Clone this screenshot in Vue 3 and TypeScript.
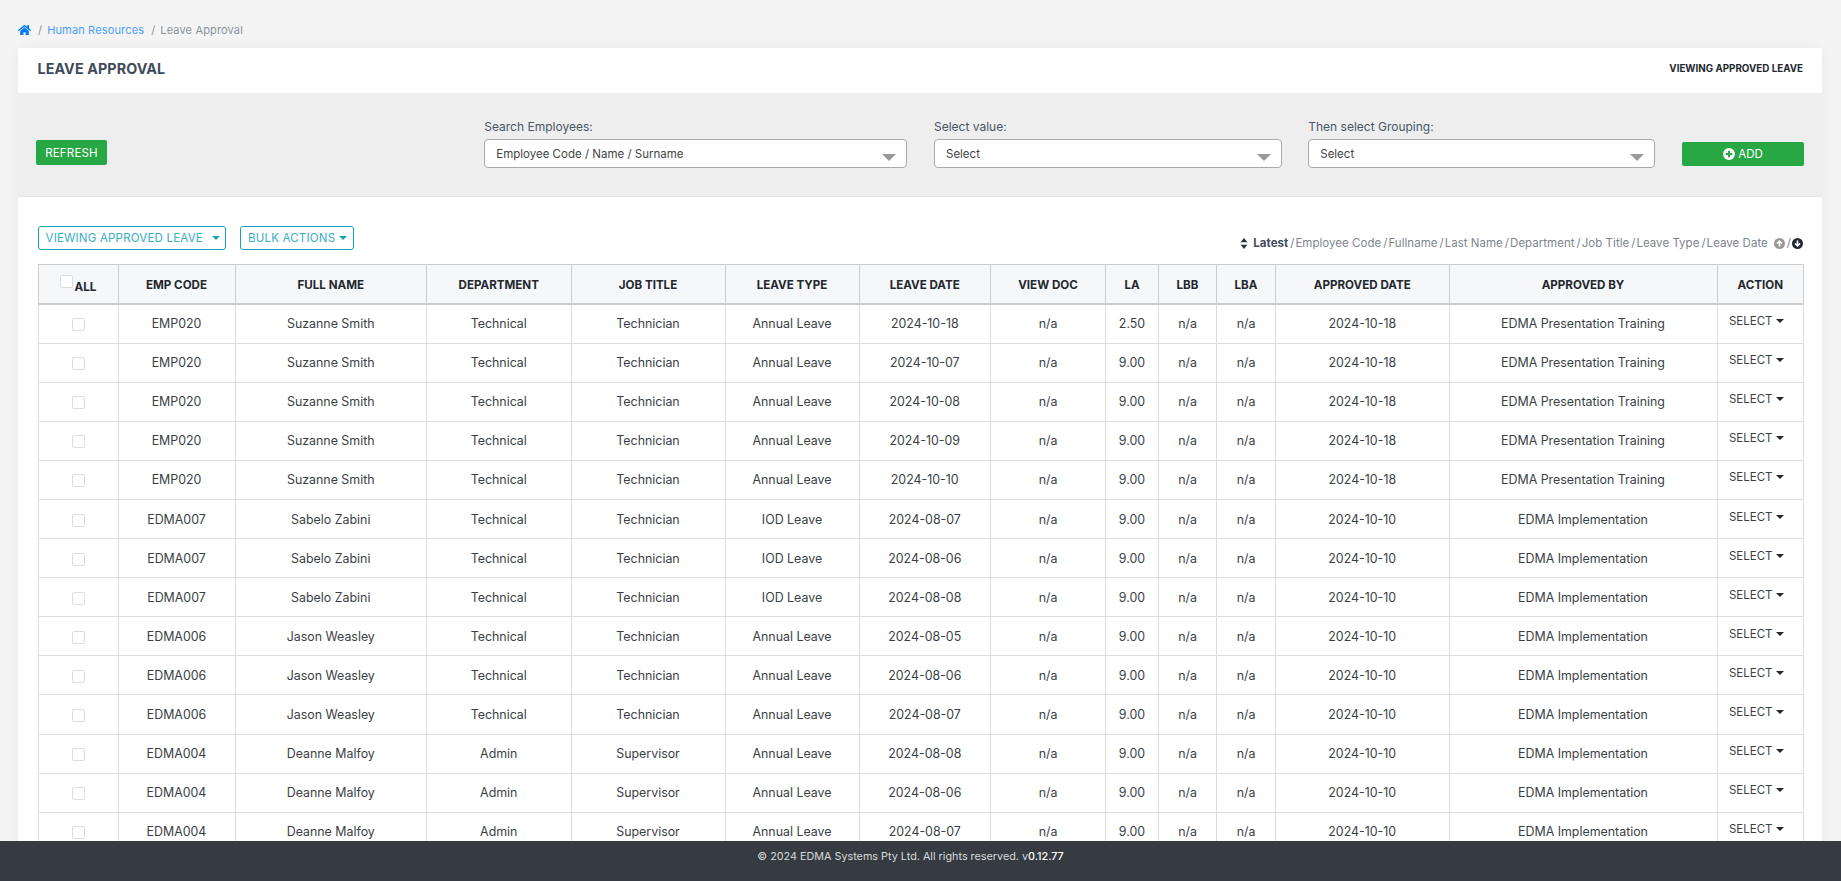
<script setup lang="ts">
interface Row {
  code: string
  name: string
  dept: string
  job: string
  type: string
  date: string
  la: string
  approved: string
  by: string
}

const presentation = 'EDMA Presentation Training'
const implementation = 'EDMA Implementation'

function make(code: string, name: string, dept: string, job: string, type: string, date: string, la: string, approved: string, by: string): Row {
  return { code, name, dept, job, type, date, la, approved, by }
}

const rows: Row[] = [
  make('EMP020', 'Suzanne Smith', 'Technical', 'Technician', 'Annual Leave', '2024-10-18', '2.50', '2024-10-18', presentation),
  make('EMP020', 'Suzanne Smith', 'Technical', 'Technician', 'Annual Leave', '2024-10-07', '9.00', '2024-10-18', presentation),
  make('EMP020', 'Suzanne Smith', 'Technical', 'Technician', 'Annual Leave', '2024-10-08', '9.00', '2024-10-18', presentation),
  make('EMP020', 'Suzanne Smith', 'Technical', 'Technician', 'Annual Leave', '2024-10-09', '9.00', '2024-10-18', presentation),
  make('EMP020', 'Suzanne Smith', 'Technical', 'Technician', 'Annual Leave', '2024-10-10', '9.00', '2024-10-18', presentation),
  make('EDMA007', 'Sabelo Zabini', 'Technical', 'Technician', 'IOD Leave', '2024-08-07', '9.00', '2024-10-10', implementation),
  make('EDMA007', 'Sabelo Zabini', 'Technical', 'Technician', 'IOD Leave', '2024-08-06', '9.00', '2024-10-10', implementation),
  make('EDMA007', 'Sabelo Zabini', 'Technical', 'Technician', 'IOD Leave', '2024-08-08', '9.00', '2024-10-10', implementation),
  make('EDMA006', 'Jason Weasley', 'Technical', 'Technician', 'Annual Leave', '2024-08-05', '9.00', '2024-10-10', implementation),
  make('EDMA006', 'Jason Weasley', 'Technical', 'Technician', 'Annual Leave', '2024-08-06', '9.00', '2024-10-10', implementation),
  make('EDMA006', 'Jason Weasley', 'Technical', 'Technician', 'Annual Leave', '2024-08-07', '9.00', '2024-10-10', implementation),
  make('EDMA004', 'Deanne Malfoy', 'Admin', 'Supervisor', 'Annual Leave', '2024-08-08', '9.00', '2024-10-10', implementation),
  make('EDMA004', 'Deanne Malfoy', 'Admin', 'Supervisor', 'Annual Leave', '2024-08-06', '9.00', '2024-10-10', implementation),
  make('EDMA004', 'Deanne Malfoy', 'Admin', 'Supervisor', 'Annual Leave', '2024-08-07', '9.00', '2024-10-10', implementation),
]

const colWidths = [80, 117, 191.5, 144.5, 154, 134, 131.5, 115, 53, 58, 59, 173.5, 268, 86.5]
const headers = ['EMP CODE', 'FULL NAME', 'DEPARTMENT', 'JOB TITLE', 'LEAVE TYPE', 'LEAVE DATE', 'VIEW DOC', 'LA', 'LBB', 'LBA', 'APPROVED DATE', 'APPROVED BY', 'ACTION']
const sortKeys = ['Employee Code', 'Fullname', 'Last Name', 'Department', 'Job Title', 'Leave Type', 'Leave Date']
</script>

<template>
  <div class="page">
    <main class="main">
      <nav class="crumbs">
        <svg class="home" viewBox="0 0 576 512" aria-hidden="true">
          <path d="M280.37 148.26L96 300.11V464a16 16 0 0 0 16 16l112.06-.29a16 16 0 0 0 15.92-16V368a16 16 0 0 1 16-16h64a16 16 0 0 1 16 16v95.64a16 16 0 0 0 16 16.05L464 480a16 16 0 0 0 16-16V300L295.67 148.26a12.19 12.19 0 0 0-15.3 0zM571.6 251.47L488 182.56V44.05a12 12 0 0 0-12-12h-56a12 12 0 0 0-12 12v72.61L318.47 43a48 48 0 0 0-61 0L4.34 251.47a12 12 0 0 0-1.6 16.9l25.5 31A12 12 0 0 0 45.15 301l235.22-193.74a12.19 12.19 0 0 1 15.3 0L530.9 301a12 12 0 0 0 16.9-1.6l25.5-31a12 12 0 0 0-1.7-16.93z" />
        </svg>
        <span class="sep">/</span>
        <a class="crumb-link">Human Resources</a>
        <span class="sep">/</span>
        <span class="crumb-current">Leave Approval</span>
      </nav>

      <section class="card">
        <header class="title-bar">
          <h1>LEAVE APPROVAL</h1>
          <span class="status">VIEWING APPROVED LEAVE</span>
        </header>

        <div class="filters">
          <button class="btn refresh">REFRESH</button>
          <div class="field">
            <label>Search Employees:</label>
            <div class="select">Employee Code / Name / Surname<i class="arrow"></i></div>
          </div>
          <div class="field">
            <label>Select value:</label>
            <div class="select">Select<i class="arrow"></i></div>
          </div>
          <div class="field">
            <label>Then select Grouping:</label>
            <div class="select">Select<i class="arrow"></i></div>
          </div>
          <button class="btn add">
            <svg class="plus" viewBox="0 0 16 16" aria-hidden="true">
              <circle cx="8" cy="8" r="8" fill="#fff" />
              <path d="M8 3.6v8.8M3.6 8h8.8" stroke="#28a745" stroke-width="2.6" />
            </svg>
            ADD
          </button>
        </div>

        <div class="content">
          <div class="toolbar">
            <div class="actions">
              <button class="outline wide">VIEWING APPROVED LEAVE<i class="caret"></i></button>
              <button class="outline">BULK ACTIONS<i class="caret"></i></button>
            </div>
            <div class="sort">
              <svg class="sort-icon" viewBox="0 0 10 14" aria-hidden="true">
                <path d="M5 0l4.4 5.4H.6zM5 14L.6 8.6h8.8z" />
              </svg>
              <b>Latest</b>
              <template v-for="key in sortKeys" :key="key">
                <span class="slash">/</span><span>{{ key }}</span>
              </template>
              <svg class="dir first" viewBox="0 0 16 16" aria-hidden="true">
                <circle cx="8" cy="8" r="8" fill="#999" />
                <path d="M8 12.5V5M4.4 8.2L8 4.6l3.6 3.6" fill="none" stroke="#fff" stroke-width="2.2" />
              </svg>
              <span class="slash">/</span>
              <svg class="dir" viewBox="0 0 16 16" aria-hidden="true">
                <circle cx="8" cy="8" r="8" fill="#222a35" />
                <path d="M8 3.5V11M4.4 7.8L8 11.4l3.6-3.6" fill="none" stroke="#fff" stroke-width="2.2" />
              </svg>
            </div>
          </div>

          <table class="grid">
            <colgroup>
              <col v-for="(w, i) in colWidths" :key="i" :style="{ width: w + 'px' }" />
            </colgroup>
            <thead>
              <tr>
                <th class="all"><i class="check head-check"></i>ALL</th>
                <th v-for="h in headers" :key="h">{{ h }}</th>
              </tr>
            </thead>
            <tbody>
              <tr v-for="(r, i) in rows" :key="i">
                <td><i class="check"></i></td>
                <td>{{ r.code }}</td>
                <td>{{ r.name }}</td>
                <td>{{ r.dept }}</td>
                <td>{{ r.job }}</td>
                <td>{{ r.type }}</td>
                <td>{{ r.date }}</td>
                <td>n/a</td>
                <td>{{ r.la }}</td>
                <td>n/a</td>
                <td>n/a</td>
                <td>{{ r.approved }}</td>
                <td>{{ r.by }}</td>
                <td class="action"><span>SELECT<i class="caret dark"></i></span></td>
              </tr>
            </tbody>
          </table>
        </div>
      </section>
    </main>

    <footer class="footer">
      <span>© 2024 EDMA Systems Pty Ltd. All rights reserved. v<b>0.12.77</b></span>
    </footer>
  </div>
</template>

<style scoped>
.page {
  height: 100vh;
  display: flex;
  flex-direction: column;
  overflow: hidden;
  background: #f4f4f4;
  font-family: Inter, "Open Sans", sans-serif;
  font-size: 12px;
  color: #3e4b5b;
}
.main {
  flex: 1;
  min-height: 0;
  overflow: hidden;
  padding: 0 19px 0 18px;
}
.crumbs {
  height: 48px;
  box-sizing: border-box;
  padding-top: 23px;
  padding-bottom: 12px;
  display: flex;
  align-items: center;
  font-size: 11px;
  letter-spacing: 0.15px;
}
.home {
  width: 13px;
  height: 12px;
  fill: #007bff;
}
.sep {
  color: #8a9199;
  margin: 0 5px 0 7px;
}
.crumb-link {
  color: #4a9eff;
}
.crumb-current {
  color: #8b939b;
}
.card {
  background: #fff;
  box-shadow: 0 0 12px rgba(0, 0, 0, 0.05);
}
.title-bar {
  height: 45px;
  box-sizing: border-box;
  padding: 0 19px 4px 19.5px;
  display: flex;
  align-items: center;
  justify-content: space-between;
}
h1 {
  margin: 0;
  font-size: 14.3px;
  font-weight: 700;
  color: #3e4b5b;
  letter-spacing: 0.1px;
}
.status {
  font-size: 9.8px;
  font-weight: 700;
  color: #23282e;
}
.filters {
  height: 104px;
  box-sizing: border-box;
  border-bottom: 1px solid #e3e6ea;
  background: #eee;
  padding: 0 18px 28px;
  display: grid;
  grid-template-columns: 421.5px 423px 347.5px 347px 122px;
  column-gap: 26.75px;
  align-items: end;
}
.field label {
  display: block;
  margin-bottom: 5px;
  font-size: 12px;
  line-height: 15px;
  color: #4a5664;
}
.select {
  position: relative;
  height: 29px;
  box-sizing: border-box;
  border: 1px solid #aaa;
  border-radius: 4px;
  background: #fff;
  padding-left: 11px;
  line-height: 28px;
  font-size: 11.5px;
  color: #444;
}
.arrow {
  position: absolute;
  right: 10px;
  top: 14px;
  border-left: 7px solid transparent;
  border-right: 7px solid transparent;
  border-top: 7px solid #999;
}
.btn {
  border: 0;
  border-radius: 2px;
  background: #28a745;
  color: #fff;
  font-family: inherit;
  font-size: 11.5px;
  padding: 0;
}
.refresh {
  width: 71px;
  height: 25px;
  margin-bottom: 3px;
  letter-spacing: 0.2px;
}
.add {
  width: 122px;
  height: 24px;
  margin-bottom: 2px;
  display: flex;
  align-items: center;
  justify-content: center;
  gap: 3px;
}
.plus {
  width: 12px;
  height: 12px;
}
.content {
  padding: 29px 19px 0 19.5px;
}
.toolbar {
  height: 38px;
  display: flex;
  justify-content: space-between;
}
.actions {
  display: flex;
  gap: 14px;
}
.outline {
  height: 24px;
  box-sizing: border-box;
  border: 1px solid #17a2b8;
  border-radius: 3px;
  background: #fff;
  color: #36aec2;
  font-family: inherit;
  font-size: 11.5px;
  letter-spacing: 0.2px;
  padding: 0 6px 0 7px;
  display: flex;
  align-items: center;
}
.caret {
  display: inline-block;
  margin-left: 4px;
  border-left: 4px solid transparent;
  border-right: 4px solid transparent;
  border-top: 4.5px solid #17a2b8;
}
.wide {
  padding-right: 5px;
}
.wide .caret {
  margin-left: 9px;
}
.caret.dark {
  border-top-color: #23282e;
  margin-left: 3px;
  vertical-align: 2px;
}
.sort {
  height: 24px;
  padding-top: 5px;
  box-sizing: content-box;
  display: flex;
  align-items: center;
  font-size: 11.5px;
  letter-spacing: 0.03px;
  color: #7d858d;
}
.sort b {
  margin-left: 5px;
  color: #3e4b5b;
}
.sort-icon {
  width: 8px;
  height: 11px;
  fill: #2b3440;
}
.slash {
  margin: 0 1px 0 2px;
}
.dir {
  width: 11px;
  height: 11px;
}
.dir.first {
  margin-left: 6px;
}
.grid {
  table-layout: fixed;
  width: 1765px;
  border-collapse: collapse;
  font-size: 12.4px;
}
th,
td {
  border: 1px solid #ddd;
  padding: 0;
  text-align: center;
}
thead th {
  height: 39px;
  box-sizing: border-box;
  background: #f6f7f9;
  border-color: #ccc;
  border-bottom-width: 2px;
  padding-top: 2px;
  font-size: 11.6px;
  font-weight: 700;
  color: #23282e;
}
tbody td {
  height: 38.1px;
  color: #3a3f45;
}
.check {
  display: inline-block;
  width: 11px;
  height: 11px;
  border: 1px solid #ddd;
  border-radius: 2px;
  background: #fff;
  vertical-align: middle;
}
.head-check {
  margin-right: 2px;
  vertical-align: 3px;
}
.action span {
  position: relative;
  top: -3px;
  left: -4px;
  font-size: 11.5px;
}
.footer {
  flex: none;
  height: 40px;
  background: #353b41;
  color: #d7dadc;
  box-sizing: border-box;
  padding: 9px 20px 0 0;
  text-align: center;
  font-size: 10.8px;
  line-height: 14px;
}
.footer b {
  font-weight: 500;
  color: #fff;
}
</style>

<style>
html,
body {
  margin: 0;
  overflow: hidden;
}
</style>
